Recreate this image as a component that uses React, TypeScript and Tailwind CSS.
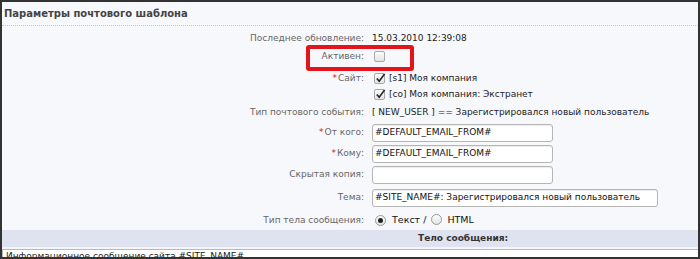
import React from 'react';

const font = { fontFamily: '"DejaVu Sans", Verdana, sans-serif' };

function Star() {
  return <span className="text-[#e01010] text-[9px] align-top mr-[1px]">*</span>;
}

function Check({ on }: { on?: boolean }) {
  return (
    <span className="relative inline-block w-[11px] h-[11px] border border-[#a9a9a9] rounded-[2px] bg-gradient-to-b from-[#fdfdfd] to-[#e4e4e4] shrink-0">
      {on && (
        <svg viewBox="0 0 12 12" className="absolute left-[0px] top-[-2px] w-[11px] h-[12px]">
          <path d="M2 6.5 L4.6 9.5 L10.5 1.5" fill="none" stroke="#222" strokeWidth="1.8" />
        </svg>
      )}
    </span>
  );
}

function Radio({ on }: { on?: boolean }) {
  return (
    <span className="inline-flex items-center justify-center w-[11px] h-[11px] rounded-full border border-[#9a9a9a] bg-gradient-to-b from-[#fdfdfd] to-[#e2e2e2] shrink-0">
      {on && <span className="w-[5px] h-[5px] rounded-full bg-[#222]" />}
    </span>
  );
}

function Row({ label, star, h, children, top }: { label: string; star?: boolean; h: string; children?: React.ReactNode; top?: boolean }) {
  return (
    <div className={`flex ${h} ${top ? 'items-start' : 'items-center'}`}>
      <div className={`w-[367px] shrink-0 pr-[5px] text-right text-[#666] ${top ? 'leading-[16px]' : ''}`}>
        {star && <Star />}
        {label}
      </div>
      <div className="flex-1 min-w-0 text-[#222]">{children}</div>
    </div>
  );
}

function Field({ value, w }: { value: string; w: string }) {
  return (
    <div className={`${w} h-[18px] ml-[3px] border border-[#b5b5b5] rounded-[3px] bg-white shadow-[inset_0_1px_1px_rgba(0,0,0,0.08)] px-[2px] flex items-center text-[#111] whitespace-nowrap overflow-hidden`}>
      {value}
    </div>
  );
}

export default function App() {
  return (
    <div style={font} className="relative w-[700px] h-[259px] overflow-hidden border-2 border-[#333] bg-[#f7f8fc] text-[9px] leading-none">
      <div className="h-[24px] flex items-center pl-[2px] border-b border-dotted border-[#c4c6cc] text-[10px] font-bold text-[#444]">
        Параметры почтового шаблона
      </div>
      <div className="pt-[3px]">
        <Row label="Последнее обновление:" h="h-[19px]">
          <span className="ml-[3px]">15.03.2010 12:39:08</span>
        </Row>
        <Row label="Активен:" h="h-[17px]">
          <span className="ml-[5px] flex items-center"><Check /></span>
        </Row>
        <Row label="Сайт:" star h="h-[37px] pt-[5px]" top>
          <div className="ml-[5px] flex flex-col">
            <div className="h-[16px] flex items-center gap-[4px]"><Check on />[s1] Моя компания</div>
            <div className="h-[16px] flex items-center gap-[4px]"><Check on />[co] Моя компания: Экстранет</div>
          </div>
        </Row>
        <Row label="Тип почтового события:" h="h-[20px]">
          <span className="ml-[3px] whitespace-nowrap">[ NEW_USER ] == Зарегистрировался новый пользователь</span>
        </Row>
        <Row label="От кого:" star h="h-[21px]">
          <Field value="#DEFAULT_EMAIL_FROM#" w="w-[181px]" />
        </Row>
        <Row label="Кому:" star h="h-[21px]">
          <Field value="#DEFAULT_EMAIL_FROM#" w="w-[181px]" />
        </Row>
        <Row label="Скрытая копия:" h="h-[21px]">
          <Field value="" w="w-[181px]" />
        </Row>
        <Row label="Тема:" h="h-[25px]">
          <Field value="#SITE_NAME#: Зарегистрировался новый пользователь" w="w-[286px]" />
        </Row>
        <Row label="Тип тела сообщения:" h="h-[20px]">
          <div className="ml-[6px] flex items-center">
            <Radio on />
            <span className="ml-[6px] text-[#111] text-[9.5px]">Текст /</span>
            <span className="ml-[5px]"><Radio /></span>
            <span className="ml-[5px] text-[#111] text-[9.5px]">HTML</span>
          </div>
        </Row>
      </div>
      <div className="h-[17px] bg-[#dfe3ef] flex items-center pl-[416px] font-bold text-[#333]">Тело сообщения:</div>
      <div className="h-[2px] bg-[#f4f5f8]" />
      <div className="border-t border-l border-[#b8b8b8] bg-white h-[20px] pl-[3px] pt-[2px] text-[#222] whitespace-nowrap">
        Информационное сообщение сайта #SITE_NAME#
      </div>
      <div className="absolute left-[304px] top-[43px] w-[108px] h-[26px] border-[4px] border-[#e4141c] rounded-[3px]" />
    </div>
  );
}
